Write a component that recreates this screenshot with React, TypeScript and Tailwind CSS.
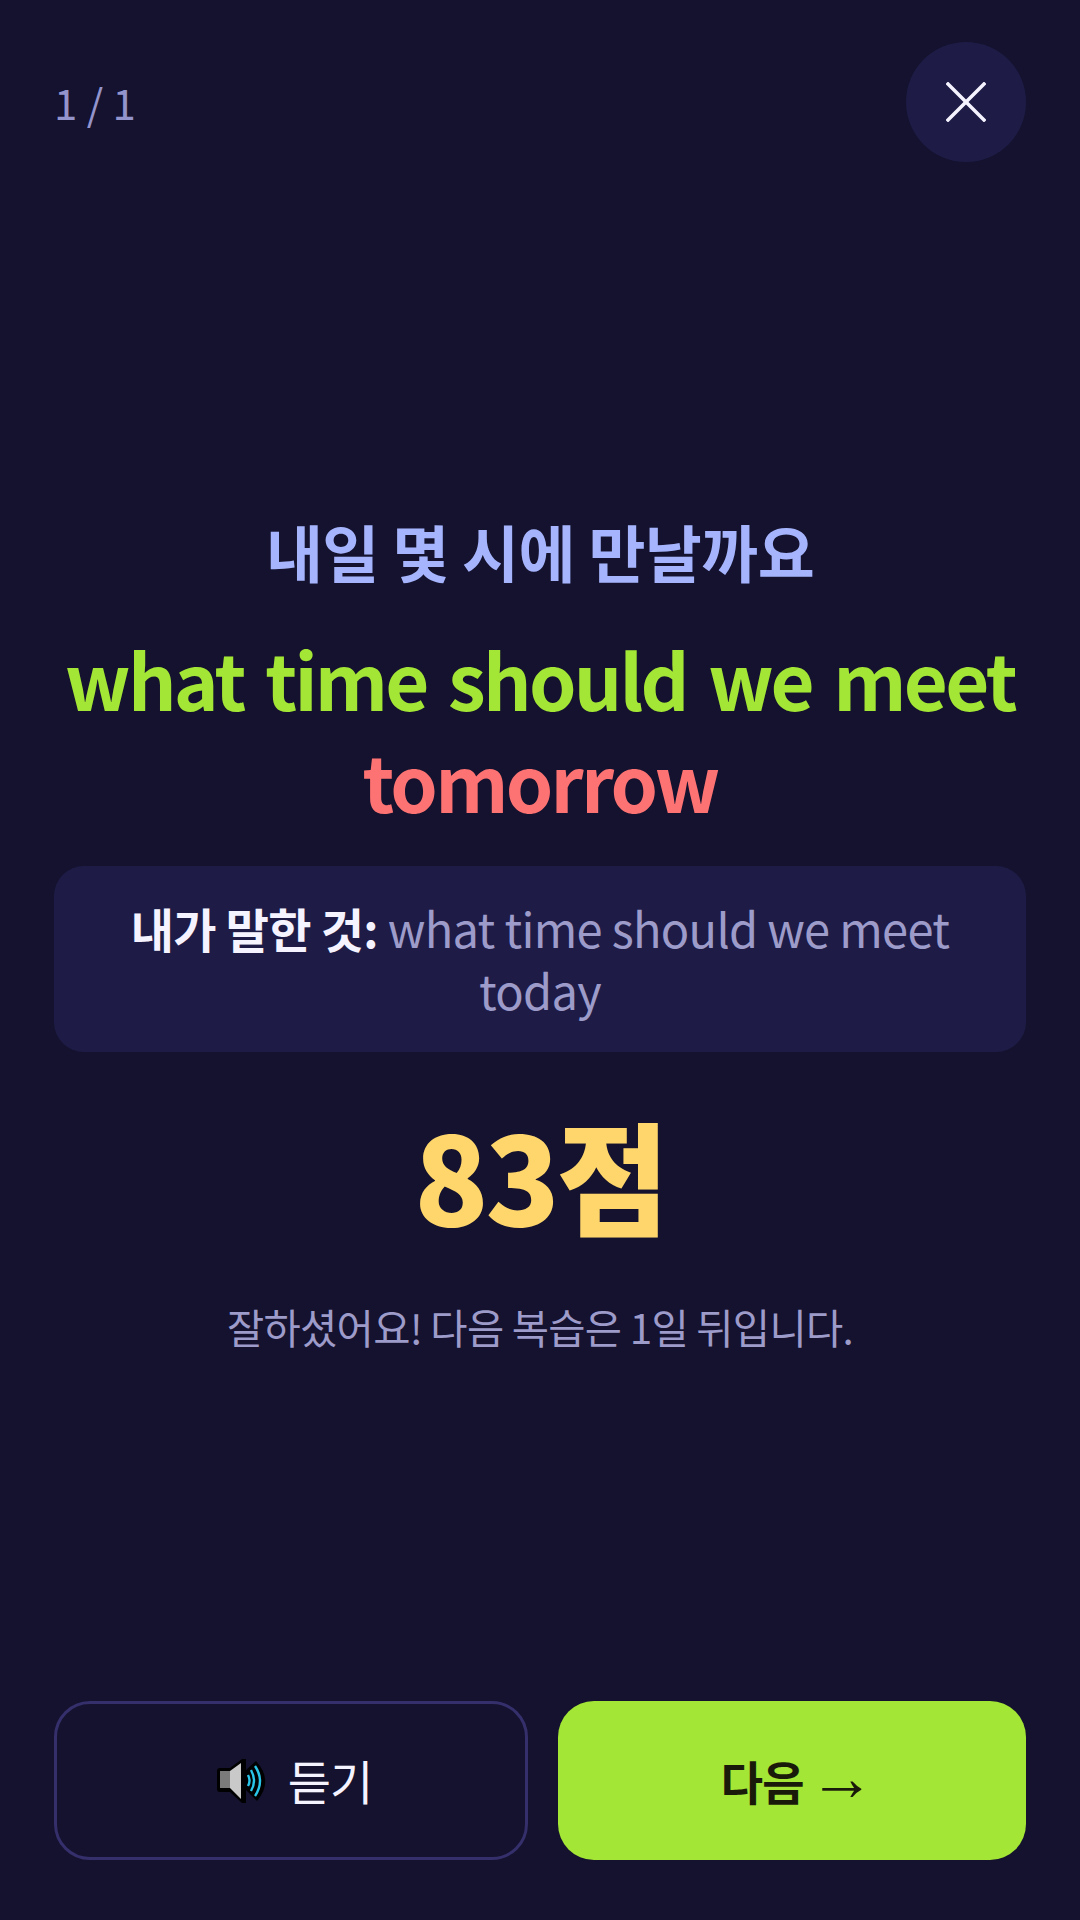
const font = { fontFamily: '"Noto Sans CJK KR", sans-serif' };

function CloseIcon() {
  return (
    <svg width="40" height="40" viewBox="0 0 40 40" stroke="#f5f3ff" strokeWidth="3.5" strokeLinecap="square">
      <path d="M2 2 L38 38" />
      <path d="M38 2 L2 38" />
    </svg>
  );
}

function SpeakerIcon() {
  return (
    <svg width="52" height="46" viewBox="0 0 52 46" fill="none">
      <path d="M14 10 L26 1 L30 1 L30 45 L26 45 L14 34 L4 34 Q1 34 1 31 L1 13 Q1 10 4 10 Z" fill="#000" />
      <path d="M4 13 L14 13 L14 30 L4 30 Z" fill="#7b7b7b" />
      <path d="M14 13 L25 5 L25 41 L14 30 Z" fill="#c9c9c9" />
      <path d="M30 12 L40 3 Q58 23 41 43 L30 32 Z" fill="#000" />
      <path d="M32 17 Q35 23 32 28" stroke="#29c6ea" strokeWidth="2.4" />
      <path d="M35 12 Q41 23 35 33" stroke="#29c6ea" strokeWidth="2.4" />
      <path d="M39 8 Q49 23 39 38" stroke="#29c6ea" strokeWidth="2.4" />
    </svg>
  );
}

export default function App() {
  return (
    <div style={font} className="w-[1080px] h-[1920px] bg-[#14122e] flex flex-col px-[54px] pt-[42px] pb-[60px] text-center">
      {/* Header */}
      <div className="flex items-center justify-between">
        <span className="text-[42px] text-[#9494cc] -translate-y-px">1 / 1</span>
        <button className="w-[120px] h-[120px] rounded-full bg-[#1e1c46] flex items-center justify-center">
          <CloseIcon />
        </button>
      </div>

      {/* Result */}
      <div className="flex-1 flex flex-col justify-center items-center">
        <div className="text-[62px] font-bold text-[#a5b4fc] leading-[82px] mb-[35px] tracking-[-0.01em]">내일 몇 시에 만날까요</div>
        <div className="text-[76px] font-bold leading-[102px] mb-[35px] tracking-[-0.036em] [word-spacing:0.09em]">
          <span className="text-[#a3e635]">what time should we meet </span>
          <span className="text-[#fd7272]">tomorrow</span>
        </div>
        <div className="w-full bg-[#1e1c46] rounded-[30px] px-[48px] py-[31px] text-[47px] leading-[62px] text-[#9d9bc9] mb-[39px] tracking-[-0.015em]">
          <span className="font-bold text-[#f5f3ff]">내가 말한 것:</span> what time should we meet today
        </div>
        <div className="text-[122px] font-black leading-[164px] text-[#ffd66b] tracking-[-0.025em]">83점</div>
        <div className="text-[40.5px] leading-[53px] text-[#9d9bc9] mt-[45px] tracking-[-0.018em]">잘하셨어요! 다음 복습은 1일 뒤입니다.</div>
      </div>

      {/* Actions */}
      <div className="flex gap-[30px]">
        <button className="flex-1 h-[159px] rounded-[36px] border-[3px] border-[#352f6b] text-[47px] tracking-[-0.02em] text-[#f5f3ff] flex items-center justify-center">
          <span className="flex items-center gap-[20px] ml-[6px]">
            <SpeakerIcon />
            듣기
          </span>
        </button>
        <button className="flex-1 h-[159px] rounded-[36px] bg-[#a3e635] text-[46px] tracking-[-0.02em] font-bold text-[#1a1a0a]">
          다음 <span className="text-[66px] leading-[0] -ml-[4px] -mr-[11px] font-normal [font-family:'Liberation_Sans',sans-serif]">→</span>
        </button>
      </div>
    </div>
  );
}
